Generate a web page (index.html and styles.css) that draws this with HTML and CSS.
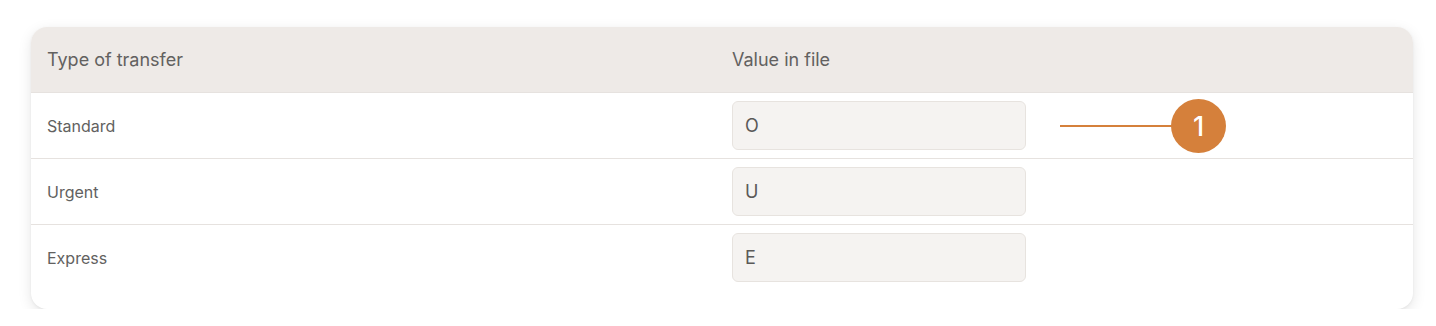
FILE: index.html
```html
<!DOCTYPE html>
<html lang="en">
<head>
<meta charset="utf-8">
<title>Transfer types</title>
<link rel="stylesheet" href="styles.css">
</head>
<body>
<div class="page">
  <div class="card">
    <div class="row head">
      <div class="cell">Type of transfer</div>
      <div class="cell">Value in file</div>
    </div>
    <div class="row">
      <div class="cell label">Standard</div>
      <div class="cell"><div class="field">O</div></div>
      <div class="callout"><span class="line"></span><span class="badge">1</span></div>
    </div>
    <div class="row">
      <div class="cell label">Urgent</div>
      <div class="cell"><div class="field">U</div></div>
    </div>
    <div class="row last">
      <div class="cell label">Express</div>
      <div class="cell"><div class="field">E</div></div>
    </div>
  </div>
</div>
</body>
</html>
```
FILE: styles.css
```css
* { box-sizing: border-box; }
html, body { margin: 0; padding: 0; background: #ffffff; }
body { font-family: Inter, "Noto Sans", sans-serif; color: #626160; }
.page { padding: 27px 23px 0 31px; }
.card {
  width: 1382px;
  background: #ffffff;
  border-radius: 16px;
  overflow: hidden;
  box-shadow: 0 4px 14px rgba(0, 0, 0, 0.10), 0 1px 3px rgba(0, 0, 0, 0.05);
}
.row {
  position: relative;
  display: grid;
  grid-template-columns: 685px 1fr;
  align-items: center;
  height: 66px;
  border-top: 1px solid #e6e2df;
}
.row.head {
  height: 65px;
  border-top: none;
  background: #eeeae7;
  font-size: 18px;
  color: #626160;
}
.row.last { height: 85px; padding-bottom: 19px; }
.cell { padding-left: 16px; }
.label { font-size: 16px; color: #626160; }
.field {
  width: 294px;
  height: 49px;
  display: flex;
  align-items: center;
  padding-left: 12px;
  background: #f5f3f1;
  border: 1px solid #e7e3df;
  border-radius: 6px;
  font-size: 18px;
  color: #5a5958;
}
.callout {
  position: absolute;
  left: 1029px;
  top: 6px;
  display: flex;
  align-items: center;
}
.line {
  display: block;
  width: 114px;
  height: 2px;
  background: #d5803b;
}
.badge {
  width: 55px;
  height: 54px;
  border-radius: 50%;
  background: #d5803b;
  color: #ffffff;
  display: flex;
  align-items: center;
  justify-content: center;
  font-size: 27px;
  font-weight: 500;
  margin-left: -3px;
}
```
